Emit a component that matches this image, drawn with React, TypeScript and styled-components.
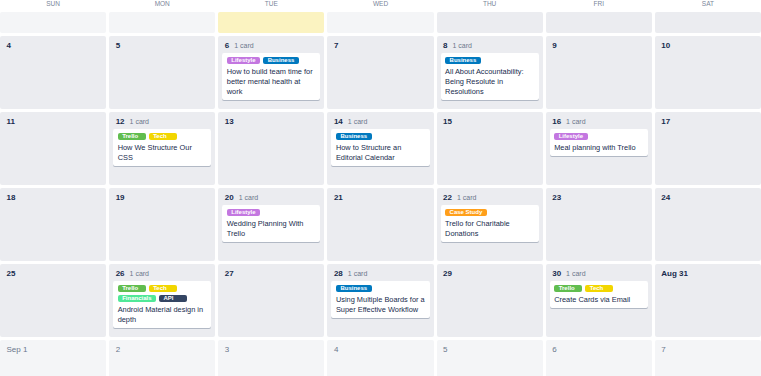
import React from "react";
import styled, { createGlobalStyle } from "styled-components";

const Global = createGlobalStyle`
  html, body {
    margin: 0;
    padding: 0;
    overflow: hidden;
    background: #ffffff;
  }
  body {
    font-family: "Liberation Sans", Arial, sans-serif;
    color: #172b4d;
  }
`;

type LabelKind = "Lifestyle" | "Business" | "Trello" | "Tech" | "Financials" | "API" | "Case Study";

const labelColors: Record<LabelKind, string> = {
  Lifestyle: "#c377e0",
  Business: "#0079bf",
  Trello: "#61bd4f",
  Tech: "#f2d600",
  Financials: "#51e898",
  API: "#344563",
  "Case Study": "#ff9f1a",
};

type CardData = { labels: LabelKind[]; title: string };
type Kind = "past" | "today" | "current" | "next";
type Day = { label?: string; kind: Kind; card?: CardData };

const bg: Record<Kind, string> = {
  past: "#f4f5f7",
  today: "#fbf3c1",
  current: "#ebecf0",
  next: "#f4f5f7",
};

const Page = styled.div`
  width: 761px;
  display: flex;
  flex-direction: column;
`;

const HeaderRow = styled.div`
  display: grid;
  grid-template-columns: repeat(7, 1fr);
  column-gap: 3px;
  height: 12px;
`;

const DayName = styled.div`
  text-align: center;
  font-size: 6.5px;
  line-height: 8px;
  color: #7a869a;
  text-transform: uppercase;
`;

const Weeks = styled.div`
  display: flex;
  flex-direction: column;
  gap: 3px;
`;

const Week = styled.div<{ $h: number }>`
  display: grid;
  grid-template-columns: repeat(7, 1fr);
  column-gap: 3px;
  height: ${(p) => p.$h}px;
`;

const Cell = styled.div<{ $kind: Kind }>`
  background: ${(p) => bg[p.$kind]};
  border-radius: 2px;
  padding: 4px;
  box-sizing: border-box;
  display: flex;
  flex-direction: column;
  gap: 1px;
  overflow: hidden;
  min-width: 0;
`;

const CellHead = styled.div`
  display: flex;
  align-items: baseline;
  height: 12px;
  line-height: 12px;
  padding-left: 2.5px;
`;

const DateNum = styled.span<{ $muted: boolean }>`
  font-size: 8px;
  font-weight: ${(p) => (p.$muted ? 400 : 700)};
  color: ${(p) => (p.$muted ? "#6b778c" : "#172b4d")};
`;

const Count = styled.span`
  font-size: 7px;
  color: #6b778c;
  margin-left: 5px;
`;

const Card = styled.div`
  background: #ffffff;
  border-radius: 2px;
  box-shadow: 0 1px 0 rgba(9, 30, 66, 0.25);
  padding: 4px 3px 3.5px 4.5px;
`;

const Labels = styled.div`
  display: flex;
  flex-wrap: wrap;
  gap: 3px;
  margin-bottom: 2.5px;
`;

const Label = styled.span<{ $color: string }>`
  display: inline-block;
  min-width: 28px;
  box-sizing: border-box;
  height: 7px;
  line-height: 7px;
  padding: 0 4.5px;
  border-radius: 2px;
  background: ${(p) => p.$color};
  color: #ffffff;
  font-size: 6px;
  font-weight: 700;
`;

const Title = styled.div`
  font-size: 7.4px;
  line-height: 10px;
  color: #172b4d;
`;

const cur = (label: string, card?: CardData): Day => ({ label, kind: "current", card });

const weeks: Day[][] = [
  [
    { kind: "past" },
    { kind: "past" },
    { kind: "today" },
    { kind: "past" },
    { kind: "current" },
    { kind: "current" },
    { kind: "current" },
  ],
  [
    cur("4"),
    cur("5"),
    cur("6", { labels: ["Lifestyle", "Business"], title: "How to build team time for better mental health at work" }),
    cur("7"),
    cur("8", { labels: ["Business"], title: "All About Accountability: Being Resolute in Resolutions" }),
    cur("9"),
    cur("10"),
  ],
  [
    cur("11"),
    cur("12", { labels: ["Trello", "Tech"], title: "How We Structure Our CSS" }),
    cur("13"),
    cur("14", { labels: ["Business"], title: "How to Structure an Editorial Calendar" }),
    cur("15"),
    cur("16", { labels: ["Lifestyle"], title: "Meal planning with Trello" }),
    cur("17"),
  ],
  [
    cur("18"),
    cur("19"),
    cur("20", { labels: ["Lifestyle"], title: "Wedding Planning With Trello" }),
    cur("21"),
    cur("22", { labels: ["Case Study"], title: "Trello for Charitable Donations" }),
    cur("23"),
    cur("24"),
  ],
  [
    cur("25"),
    cur("26", { labels: ["Trello", "Tech", "Financials", "API"], title: "Android Material design in depth" }),
    cur("27"),
    cur("28", { labels: ["Business"], title: "Using Multiple Boards for a Super Effective Workflow" }),
    cur("29"),
    cur("30", { labels: ["Trello", "Tech"], title: "Create Cards via Email" }),
    cur("Aug 31"),
  ],
  ["Sep 1", "2", "3", "4", "5", "6", "7"].map((l) => ({ label: l, kind: "next" as Kind })),
];

const dayNames = ["Sun", "Mon", "Tue", "Wed", "Thu", "Fri", "Sat"];

const DayCell: React.FC<{ day: Day }> = ({ day }) => (
  <Cell $kind={day.kind}>
    {day.label && (
      <CellHead>
        <DateNum $muted={day.kind === "next"}>{day.label}</DateNum>
        {day.card && <Count>1 card</Count>}
      </CellHead>
    )}
    {day.card && (
      <Card>
        <Labels>
          {day.card.labels.map((l) => (
            <Label key={l} $color={labelColors[l]}>
              {l}
            </Label>
          ))}
        </Labels>
        <Title>{day.card.title}</Title>
      </Card>
    )}
  </Cell>
);

export default function App() {
  return (
    <Page>
      <Global />
      <HeaderRow>
        {dayNames.map((d) => (
          <DayName key={d}>{d}</DayName>
        ))}
      </HeaderRow>
      <Weeks>
        {weeks.map((w, i) => (
          <Week key={i} $h={i === 0 ? 21 : 73}>
            {w.map((d, j) => (
              <DayCell key={j} day={d} />
            ))}
          </Week>
        ))}
      </Weeks>
    </Page>
  );
}
